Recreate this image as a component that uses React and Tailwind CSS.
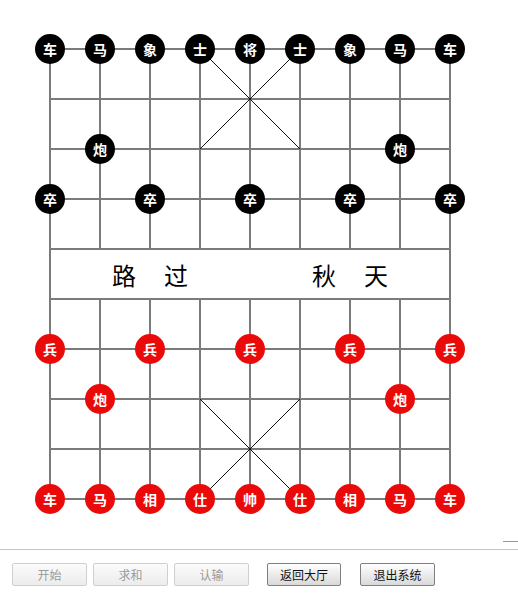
import React from "react";

const COLS = [50, 100, 150, 200, 250, 300, 350, 400, 450];
const ROWS = [49, 99, 149, 199, 249, 299, 349, 399, 449, 499];

const pieces = [
  ...["车", "马", "象", "士", "将", "士", "象", "马", "车"].map((t, i) => ({ t, c: i, r: 0, red: false })),
  { t: "炮", c: 1, r: 2, red: false },
  { t: "炮", c: 7, r: 2, red: false },
  ...[0, 2, 4, 6, 8].map((c) => ({ t: "卒", c, r: 3, red: false })),
  ...[0, 2, 4, 6, 8].map((c) => ({ t: "兵", c, r: 6, red: true })),
  { t: "炮", c: 1, r: 7, red: true },
  { t: "炮", c: 7, r: 7, red: true },
  ...["车", "马", "相", "仕", "帅", "仕", "相", "马", "车"].map((t, i) => ({ t, c: i, r: 9, red: true })),
];

function Board() {
  const lines = [];
  // horizontal lines
  ROWS.forEach((y, i) => {
    lines.push(<line key={"h" + i} x1={49} y1={y} x2={451} y2={y} stroke="#7b7b7b" strokeWidth="2" />);
  });
  // vertical lines
  COLS.forEach((x, i) => {
    if (i === 0 || i === 8) {
      lines.push(<line key={"v" + i} x1={x} y1={48} x2={x} y2={500} stroke="#7b7b7b" strokeWidth="2" />);
    } else {
      lines.push(<line key={"vt" + i} x1={x} y1={48} x2={x} y2={249} stroke="#7b7b7b" strokeWidth="2" />);
      lines.push(<line key={"vb" + i} x1={x} y1={299} x2={x} y2={500} stroke="#7b7b7b" strokeWidth="2" />);
    }
  });
  return (
    <svg width="518" height="541" className="absolute left-0 top-0">
      {lines}
      <line x1={200} y1={49} x2={300} y2={149} stroke="#111" strokeWidth="1" />
      <line x1={300} y1={49} x2={200} y2={149} stroke="#111" strokeWidth="1" />
      <line x1={200} y1={399} x2={300} y2={499} stroke="#111" strokeWidth="1" />
      <line x1={300} y1={399} x2={200} y2={499} stroke="#111" strokeWidth="1" />
    </svg>
  );
}

function Btn({ children, disabled, w }) {
  return (
    <button
      className={
        disabled
          ? "h-[23px] rounded-[2px] border border-[#cfcfcf] bg-gradient-to-b from-[#fbfbfb] to-[#ececec] text-[12px] text-[#9a9a9a]"
          : "h-[23px] rounded-[2px] border border-[#7f7f7f] bg-gradient-to-b from-[#ffffff] to-[#d9d9d9] text-[12px] text-[#111]"
      }
      style={{ width: w }}
    >
      {children}
    </button>
  );
}

export default function App() {
  return (
    <div className="w-[518px] h-[600px] bg-white overflow-hidden" style={{ fontFamily: '"Noto Sans CJK SC", "Noto Sans", sans-serif' }}>
      <div className="relative h-[541px]">
        <Board />
        <div className="absolute left-[112px] top-[261px] w-[76px] flex justify-between text-[24px] leading-[28px] text-black">
          <span>路</span>
          <span>过</span>
        </div>
        <div className="absolute left-[312px] top-[261px] w-[76px] flex justify-between text-[24px] leading-[28px] text-black">
          <span>秋</span>
          <span>天</span>
        </div>
        {pieces.map((p, i) => (
          <div
            key={i}
            className={
              "absolute w-[30px] h-[30px] rounded-full flex items-center justify-center text-white font-bold text-[14px] leading-none " +
              (p.red ? "bg-[#ea0a0a]" : "bg-black")
            }
            style={{ left: COLS[p.c] - 15, top: ROWS[p.r] - 15 }}
          >
            {p.t}
          </div>
        ))}
      </div>
      <div className="flex justify-end">
        <div className="h-px w-[15px] bg-[#9a9a9a]" />
      </div>
      <div className="mt-[7px] h-px bg-[#c4c4c4]" />
      <div className="flex items-center pl-[12px] pt-[13px]">
        <Btn disabled w={75}>开始</Btn>
        <div className="w-[6px]" />
        <Btn disabled w={75}>求和</Btn>
        <div className="w-[6px]" />
        <Btn disabled w={75}>认输</Btn>
        <div className="w-[18px]" />
        <Btn w={74}>返回大厅</Btn>
        <div className="w-[19px]" />
        <Btn w={75}>退出系统</Btn>
      </div>
    </div>
  );
}
